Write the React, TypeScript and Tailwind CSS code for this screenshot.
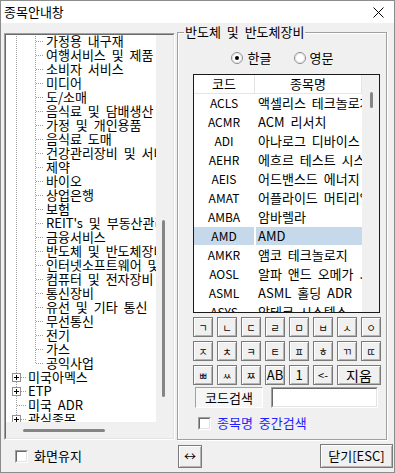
import React from 'react';

const TREE_SUB = [
  '가정용 내구재',
  '여행서비스 및 제품',
  '소비자 서비스',
  '미디어',
  '도/소매',
  '음식료 및 담배생산',
  '가정 및 개인용품',
  '음식료 도매',
  '건강관리장비 및 서비스',
  '제약',
  '바이오',
  '상업은행',
  '보험',
  "REIT's 및 부동산관리",
  '금융서비스',
  '반도체 및 반도체장비',
  '인터넷소프트웨어 및 서비스',
  '컴퓨터 및 전자장비',
  '통신장비',
  '유선 및 기타 통신',
  '무선통신',
  '전기',
  '가스',
  '공익사업',
];

const TREE_TOP = [
  { label: '미국아멕스', box: true },
  { label: 'ETP', box: true },
  { label: '미국 ADR', box: false },
  { label: '관심종목', box: true },
];

const STOCKS: [string, string][] = [
  ['ACLS', '액셀리스 테크놀로지스'],
  ['ACMR', 'ACM 리서치'],
  ['ADI', '아나로그 디바이스'],
  ['AEHR', '에흐르 테스트 시스템'],
  ['AEIS', '어드밴스드 에너지'],
  ['AMAT', "어플라이드 머티리얼즈"],
  ['AMBA', '암바렐라'],
  ['AMD', 'AMD'],
  ['AMKR', '앰코 테크놀로지'],
  ['AOSL', '알파 앤드 오메가 .'],
  ['ASML', 'ASML 홀딩 ADR'],
  ['ASYS', '암테크 시스템스'],
];

const KEYS = ['ㄱ', 'ㄴ', 'ㄷ', 'ㄹ', 'ㅁ', 'ㅂ', 'ㅅ', 'ㅇ', 'ㅈ', 'ㅊ', 'ㅋ', 'ㅌ', 'ㅍ', 'ㅎ', 'ㄲ', 'ㄸ', 'ㅃ', 'ㅆ', 'ㅉ'];

const DOT = { stroke: '#a0a0a0', strokeWidth: 1, strokeDasharray: '1 1' };

// classic raised button
const BTN =
  'flex items-center justify-center bg-[#f0f0f0] border border-[#7a7a7a] shadow-[inset_1px_1px_0_#ffffff,inset_-1px_-1px_0_#b4b4b4]';

function SubRow({ label, last }: { label: string; last: boolean }) {
  return (
    <div className="flex h-[14px] items-center">
      <svg width="40" height="14" className="shrink-0">
        <line x1="10.5" y1="0" x2="10.5" y2="14" {...DOT} />
        <line x1="29.5" y1="0" x2="29.5" y2={last ? 7 : 14} {...DOT} />
        <line x1="30" y1="7.5" x2="38" y2="7.5" {...DOT} />
      </svg>
      <span className="whitespace-nowrap leading-[14px] [word-spacing:3px]">{label}</span>
    </div>
  );
}

function TopRow({ label, box, last }: { label: string; box: boolean; last: boolean }) {
  return (
    <div className="flex h-[14px] items-center">
      <svg width="22" height="14" className="shrink-0">
        <line x1="10.5" y1="0" x2="10.5" y2={last ? 7 : 14} {...DOT} />
        <line x1="11" y1="7.5" x2="21" y2="7.5" {...DOT} />
        {box && (
          <g>
            <rect x="6.5" y="3.5" width="8" height="8" fill="#fff" stroke="#919191" />
            <line x1="8" y1="7.5" x2="13" y2="7.5" stroke="#000" />
            <line x1="10.5" y1="5" x2="10.5" y2="10" stroke="#000" />
          </g>
        )}
      </svg>
      <span className="whitespace-nowrap leading-[14px] [word-spacing:3px]">{label}</span>
    </div>
  );
}

function TreePanel() {
  return (
    <div className="mt-[8px] w-[171px] h-[407px] border border-t-[#a0a0a0] border-l-[#a0a0a0] border-r-white border-b-white">
      <div className="w-full h-full border border-t-[#696969] border-l-[#696969] border-r-[#e3e3e3] border-b-[#e3e3e3] grid grid-cols-[1fr_17px] grid-rows-[1fr_16px] bg-white">
        <div className="overflow-hidden">
          <div className="-mt-px">
            {TREE_SUB.map((t, i) => (
              <SubRow key={t} label={t} last={i === TREE_SUB.length - 1} />
            ))}
            {TREE_TOP.map((t, i) => (
              <TopRow key={t.label} label={t.label} box={t.box} last={i === TREE_TOP.length - 1} />
            ))}
          </div>
        </div>
        <div className="bg-[#f0f0f0] pt-[185px] pl-[6px]">
          <div className="w-[3px] h-[177px] rounded-full bg-[#858585]" />
        </div>
        <div className="bg-[#f0f0f0] pt-[7px] pl-[17px]">
          <div className="h-[3px] w-[82px] rounded-full bg-[#858585]" />
        </div>
        <div className="bg-[#f0f0f0]" />
      </div>
    </div>
  );
}

function Radio({ checked }: { checked?: boolean }) {
  return (
    <svg width="12" height="12" className="shrink-0">
      <circle cx="6" cy="6" r="5.5" fill="#fff" stroke="#8a8a8a" />
      <circle cx="6" cy="6" r="4.5" fill="#fff" stroke="#dcdcdc" />
      {checked && <circle cx="6" cy="6" r="2" fill="#000" />}
    </svg>
  );
}

function CheckBox() {
  return (
    <div className="w-[13px] h-[13px] shrink-0 border border-t-[#a0a0a0] border-l-[#a0a0a0] border-r-white border-b-white">
      <div className="w-full h-full bg-white border border-t-[#696969] border-l-[#696969] border-r-[#e3e3e3] border-b-[#e3e3e3]" />
    </div>
  );
}

function StockList() {
  return (
    <div className="w-[187px] h-[239px] border border-[#1a1a1a] bg-white flex">
      <div className="w-[168px] overflow-hidden">
        <div className="flex h-[19px] border-b border-[#e5e5e5]">
          <div className="w-[61px] border-r border-[#e5e5e5] flex items-center justify-center">코드</div>
          <div className="flex-1 border-r border-[#e5e5e5] flex items-center justify-center">종목명</div>
        </div>
        {STOCKS.map(([code, name]) => {
          const sel = code === 'AMD';
          return (
            <div key={code} className="flex h-[19px] pb-px">
              <div
                className={`w-[60px] flex items-center justify-center text-[12px] ${sel ? 'bg-[#c5d9ea]' : ''}`}
              >
                {code}
              </div>
              <div
                className={`ml-[2px] flex-1 flex items-center pl-[2px] whitespace-nowrap overflow-hidden [word-spacing:3px] ${sel ? 'bg-[#c5d9ea]' : ''}`}
              >
                {name}
              </div>
            </div>
          );
        })}
      </div>
      <div className="w-[17px] bg-[#f0f0f0] pt-[17px] pl-[8px]">
        <div className="w-[3px] h-[16px] rounded-full bg-[#858585]" />
      </div>
    </div>
  );
}

function GroupPanel() {
  return (
    <fieldset className="ml-[2px] w-[210px] h-[415px] border border-[#a0a0a0] shadow-[inset_1px_1px_0_#ffffff,1px_1px_0_#ffffff]">
      <legend className="ml-[6px] px-[1px] leading-[14px] bg-[#f0f0f0] [word-spacing:3px]">
        반도체 및 반도체장비
      </legend>
      <div className="pl-[15px] flex flex-col">
        <div className="mt-[12px] h-[14px] flex items-center justify-center pr-[15px]">
          <Radio checked />
          <span className="ml-[5px] leading-[14px]">한글</span>
          <span className="ml-[22px]">
            <Radio />
          </span>
          <span className="ml-[4px] leading-[14px]">영문</span>
        </div>
        <div className="mt-[9px]">
          <StockList />
        </div>
        <div className="mt-[4px] w-[188px] grid grid-cols-8 gap-[4px]">
          {KEYS.map((k) => (
            <div key={k} className={`${BTN} h-[20px] text-[10px]`}>
              {k}
            </div>
          ))}
          <div className={`${BTN} h-[20px] text-[13px]`}>AB</div>
          <div className={`${BTN} h-[20px] text-[13px]`}>1</div>
          <div className={`${BTN} h-[20px] text-[11px]`}>&lt;-</div>
          <div className={`${BTN} col-span-2 h-[20px] text-[14px]`}>지움</div>
        </div>
        <div className="mt-[2px] flex items-center">
          <div className="ml-[2px] w-[68px] h-[21px] flex items-center justify-center border border-t-[#a0a0a0] border-l-[#a0a0a0] border-r-white border-b-white bg-[#f6f6f6]">
            코드검색
          </div>
          <div className="ml-[8px] w-[107px] h-[21px] border border-t-[#a0a0a0] border-l-[#a0a0a0] border-r-white border-b-white">
            <div className="w-full h-full bg-white border border-t-[#696969] border-l-[#696969] border-r-[#e3e3e3] border-b-[#e3e3e3]" />
          </div>
        </div>
        <div className="mt-[8px] ml-[5px] flex items-center">
          <CheckBox />
          <span className="ml-[6px] text-[#1f1fff] leading-[14px] [word-spacing:3px]">종목명 중간검색</span>
        </div>
      </div>
    </fieldset>
  );
}

export default function App() {
  return (
    <div className="w-[395px] h-[473px] bg-[#f0f0f0] border border-[#8c8c8c] flex flex-col overflow-hidden text-[13px] text-black font-['Noto_Sans_CJK_KR','Noto_Sans',sans-serif]">
      {/* Title */}
      <div className="h-[22px] shrink-0 bg-white flex items-center justify-between pl-[3px] pr-[10px]">
        <span className="leading-[14px]">종목안내창</span>
        <svg width="11" height="11" viewBox="0 0 11 11">
          <path d="M0.5 0.5 L10.5 10.5 M10.5 0.5 L0.5 10.5" stroke="#000" strokeWidth="1" />
        </svg>
      </div>

      {/* Main */}
      <div className="flex pl-[3px] pt-[2px]">
        <TreePanel />
        <GroupPanel />
      </div>

      {/* Bottom */}
      <div className="flex-1 flex items-center">
        <div className="w-[177px] pl-[14px] flex items-center">
          <CheckBox />
          <span className="ml-[6px] leading-[14px]">화면유지</span>
        </div>
        <div className={`${BTN} w-[24px] h-[23px] text-[12px]`}>↔</div>
        <div className="flex-1" />
        <div className={`${BTN} mr-[1px] w-[73px] h-[24px]`}>닫기[ESC]</div>
      </div>
    </div>
  );
}
